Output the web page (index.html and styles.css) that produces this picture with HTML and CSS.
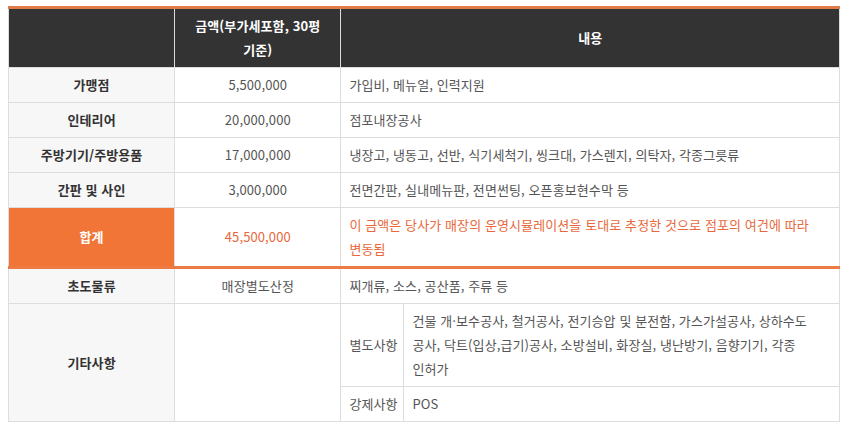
FILE: index.html
```html
<!DOCTYPE html>
<html lang="ko">
<head>
<meta charset="utf-8">
<link rel="stylesheet" href="styles.css">
</head>
<body>
<table class="cost">
  <colgroup>
    <col class="c1">
    <col class="c2">
    <col class="c3">
    <col class="c4">
  </colgroup>
  <thead>
    <tr>
      <th></th>
      <th>금액(부가세포함, 30평 기준)</th>
      <th colspan="2">내용</th>
    </tr>
  </thead>
  <tbody>
    <tr>
      <th class="label">가맹점</th>
      <td class="amt">5,500,000</td>
      <td colspan="2">가입비, 메뉴얼, 인력지원</td>
    </tr>
    <tr>
      <th class="label">인테리어</th>
      <td class="amt">20,000,000</td>
      <td colspan="2">점포내장공사</td>
    </tr>
    <tr>
      <th class="label">주방기기/주방용품</th>
      <td class="amt">17,000,000</td>
      <td colspan="2">냉장고, 냉동고, 선반, 식기세척기, 씽크대, 가스렌지, 의탁자, 각종그릇류</td>
    </tr>
    <tr>
      <th class="label">간판 및 사인</th>
      <td class="amt">3,000,000</td>
      <td colspan="2">전면간판, 실내메뉴판, 전면썬팅, 오픈홍보현수막 등</td>
    </tr>
    <tr class="total">
      <th class="label">합계</th>
      <td class="amt">45,500,000</td>
      <td colspan="2">이 금액은 당사가 매장의 운영시뮬레이션을 토대로 추정한 것으로 점포의 여건에 따라 변동됨</td>
    </tr>
    <tr class="after-total">
      <th class="label">초도물류</th>
      <td class="amt">매장별도산정</td>
      <td colspan="2">찌개류, 소스, 공산품, 주류 등</td>
    </tr>
    <tr>
      <th class="label" rowspan="2">기타사항</th>
      <td class="amt" rowspan="2"></td>
      <td class="sub">별도사항</td>
      <td>건물 개·보수공사, 철거공사, 전기승압 및 분전함, 가스가설공사, 상하수도 공사, 닥트(입상,급기)공사, 소방설비, 화장실, 냉난방기, 음향기기, 각종 인허가</td>
    </tr>
    <tr>
      <td class="sub">강제사항</td>
      <td>POS</td>
    </tr>
  </tbody>
</table>
</body>
</html>
```

FILE: styles.css
```css
html, body {
  margin: 0;
  padding: 0;
  background: #ffffff;
}

body {
  padding: 6px 8px 8px 8px;
  font-family: "Noto Sans CJK KR", "Noto Sans", sans-serif;
  font-size: 13px;
  letter-spacing: 0.1px;
  color: #555555;
}

.cost {
  width: 100%;
  border-collapse: collapse;
  table-layout: fixed;
  word-break: keep-all;
  border-top: 3px solid #e07a47;
  border-left: 1px solid #dddddd;
  border-right: 1px solid #dddddd;
  border-bottom: 1px solid #dddddd;
}

.c1 { width: 20%; }
.c2 { width: 20%; }
.c3 { width: 63px; }

.cost th,
.cost td {
  border: 1px solid #dddddd;
  padding: 5px 8px;
  line-height: 24px;
  vertical-align: middle;
}

.cost thead th {
  background: #333333;
  color: #ffffff;
  font-weight: 700;
  text-align: center;
  border-top: none;
}

.cost .label {
  background: #f7f7f7;
  color: #333333;
  font-weight: 700;
  text-align: center;
}

.cost td {
  text-align: left;
}

.cost td.amt {
  text-align: center;
}

.cost .sub {
  white-space: nowrap;
}

.cost .total th.label {
  background: #f07537;
  color: #ffffff;
}

.cost .total td {
  color: #e8683c;
}

.cost .after-total th,
.cost .after-total td {
  border-top: 3px solid #ec7a42;
}
```
